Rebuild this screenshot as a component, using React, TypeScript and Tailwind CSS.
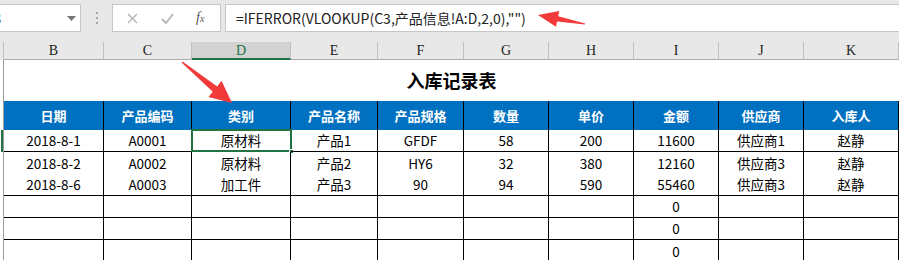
const COLS = [
  { letter: 'B', w: 'w-[100px]', label: '日期' },
  { letter: 'C', w: 'w-[88px]', label: '产品编码' },
  { letter: 'D', w: 'w-[99px]', label: '类别' },
  { letter: 'E', w: 'w-[87px]', label: '产品名称' },
  { letter: 'F', w: 'w-[86px]', label: '产品规格' },
  { letter: 'G', w: 'w-[85px]', label: '数量' },
  { letter: 'H', w: 'w-[85px]', label: '单价' },
  { letter: 'I', w: 'w-[85px]', label: '金额' },
  { letter: 'J', w: 'w-[85px]', label: '供应商' },
  { letter: 'K', w: 'w-[95px]', label: '入库人' },
];

const ROWS: { cells: string[]; border: boolean }[] = [
  { cells: ['2018-8-1', 'A0001', '原材料', '产品1', 'GFDF', '58', '200', '11600', '供应商1', '赵静'], border: true },
  { cells: ['2018-8-2', 'A0002', '原材料', '产品2', 'HY6', '32', '380', '12160', '供应商3', '赵静'], border: false },
  { cells: ['2018-8-6', 'A0003', '加工件', '产品3', '90', '94', '590', '55460', '供应商3', '赵静'], border: true },
  { cells: ['', '', '', '', '', '', '', '0', '', ''], border: true },
  { cells: ['', '', '', '', '', '', '', '0', '', ''], border: true },
  { cells: ['', '', '', '', '', '', '', '0', '', ''], border: false },
];

const FONT = "font-['Noto_Sans_CJK_SC','Noto_Sans',sans-serif]";

function FormulaBar() {
  return (
    <div className="flex h-[42px] items-start bg-[#e8e8e8] pt-[4px]">
      {/* Name box */}
      <div className="relative flex h-[28px] w-[81px] items-center overflow-hidden border border-l-0 border-[#c6c6c6] bg-white">
        <span className="-ml-[7px] text-[15px] text-[#222]">3</span>
        <svg className="absolute left-[67px] top-[11px]" width="9" height="5" viewBox="0 0 9 5">
          <path d="M0 0 L9 0 L4.5 5 Z" fill="#777" />
        </svg>
      </div>
      {/* Grip dots */}
      <div className="flex w-[31px] flex-col items-center gap-[3px] pt-[8px]">
        <span className="h-[2px] w-[2px] bg-[#a6a6a6]" />
        <span className="h-[2px] w-[2px] bg-[#a6a6a6]" />
        <span className="h-[2px] w-[2px] bg-[#a6a6a6]" />
      </div>
      {/* Cancel / enter / fx */}
      <div className="flex h-[28px] w-[109px] items-center border border-[#c6c6c6] bg-white">
        <svg className="ml-[14px]" width="11" height="11" viewBox="0 0 11 11">
          <path d="M1 1 L10 10 M10 1 L1 10" stroke="#b4b4b4" strokeWidth="1.4" />
        </svg>
        <svg className="ml-[23px]" width="13" height="11" viewBox="0 0 13 11">
          <path d="M1 6 L5 10 L12 1" stroke="#b4b4b4" strokeWidth="1.8" fill="none" />
        </svg>
        <span className="ml-[22px] font-['Liberation_Serif',serif] text-[14px] italic leading-none text-[#555]">
          f<span className="text-[10px]">x</span>
        </span>
      </div>
      {/* Formula */}
      <div className="ml-[4px] flex h-[28px] flex-1 items-center border border-r-0 border-[#c6c6c6] bg-white pl-[10px]">
        <span className="text-[14px] text-[#222]">=IFERROR(VLOOKUP(C3,产品信息!A:D,2,0),"")</span>
      </div>
    </div>
  );
}

function ColumnHeaders() {
  return (
    <div className="flex h-[18px] bg-[#e8e8e8]">
      <div className="w-[4px] border-r border-[#c0c0c0]" />
      {COLS.map((c) => (
        <div
          key={c.letter}
          className={[
            c.w,
            'flex items-center justify-center border-r border-[#c0c0c0] font-[\'Liberation_Serif\',serif] text-[14px]',
            c.letter === 'D' ? 'border-b-2 border-b-[#217346] bg-[#d2d2d2] text-[#217346]' : 'border-b border-b-[#ababab] text-[#222]',
          ].join(' ')}
        >
          {c.letter}
        </div>
      ))}
    </div>
  );
}

export default function App() {
  return (
    <div className={`relative h-[260px] w-[899px] overflow-hidden bg-white ${FONT}`}>
      <FormulaBar />
      <ColumnHeaders />

      {/* Title row */}
      <div className="flex h-[41px]">
        <div className="w-[4px] border-r border-[#9c9c9c]" />
        <div className="flex flex-1 items-center justify-center text-[18px] font-bold text-black">入库记录表</div>
      </div>

      {/* Blue header row */}
      <div className="flex h-[29px]">
        <div className="w-[4px] border-r border-[#9c9c9c]" />
        {COLS.map((c) => (
          <div
            key={c.letter}
            className={`${c.w} flex items-center justify-center border-r border-black bg-[#0070c0] text-[13px] font-bold text-white`}
          >
            {c.label}
          </div>
        ))}
      </div>

      {/* Data rows */}
      {ROWS.map((row, ri) => (
        <div key={ri} className="flex h-[22px]">
          <div className="relative w-[4px] border-r border-[#9c9c9c]">
            {ri === 0 && <div className="absolute left-[1px] top-0 h-[22px] w-[2px] bg-[#217346]" />}
          </div>
          {COLS.map((c, ci) => (
            <div
              key={c.letter}
              className={[
                c.w,
                'relative flex items-center justify-center border-r border-black text-[13.5px] text-black',
                row.border ? 'border-b' : '',
              ].join(' ')}
            >
              {row.cells[ci]}
              {ri === 0 && c.letter === 'D' && (
                <div className="absolute -left-[1px] -top-[1px] h-[23px] w-[101px] border-2 border-[#217346]">
                  <div className="absolute -bottom-[4px] -right-[4px] h-[5px] w-[5px] border border-white bg-[#217346]" />
                </div>
              )}
            </div>
          ))}
        </div>
      ))}

      {/* Annotation arrows */}
      <svg className="pointer-events-none absolute left-0 top-0" width="899" height="260" viewBox="0 0 899 260">
        <polygon
          points="538,15 559.2,10.9 558.2,16.2 585.2,23.4 584.8,24.6 557.0,21.4 556.0,26.7"
          fill="#f23a3a"
        />
        <polygon
          points="232,103 221.5,80.8 217.2,86.5 182.5,61.4 181.5,62.6 212.8,91.7 208.5,97.1"
          fill="#f23a3a"
        />
      </svg>
    </div>
  );
}
